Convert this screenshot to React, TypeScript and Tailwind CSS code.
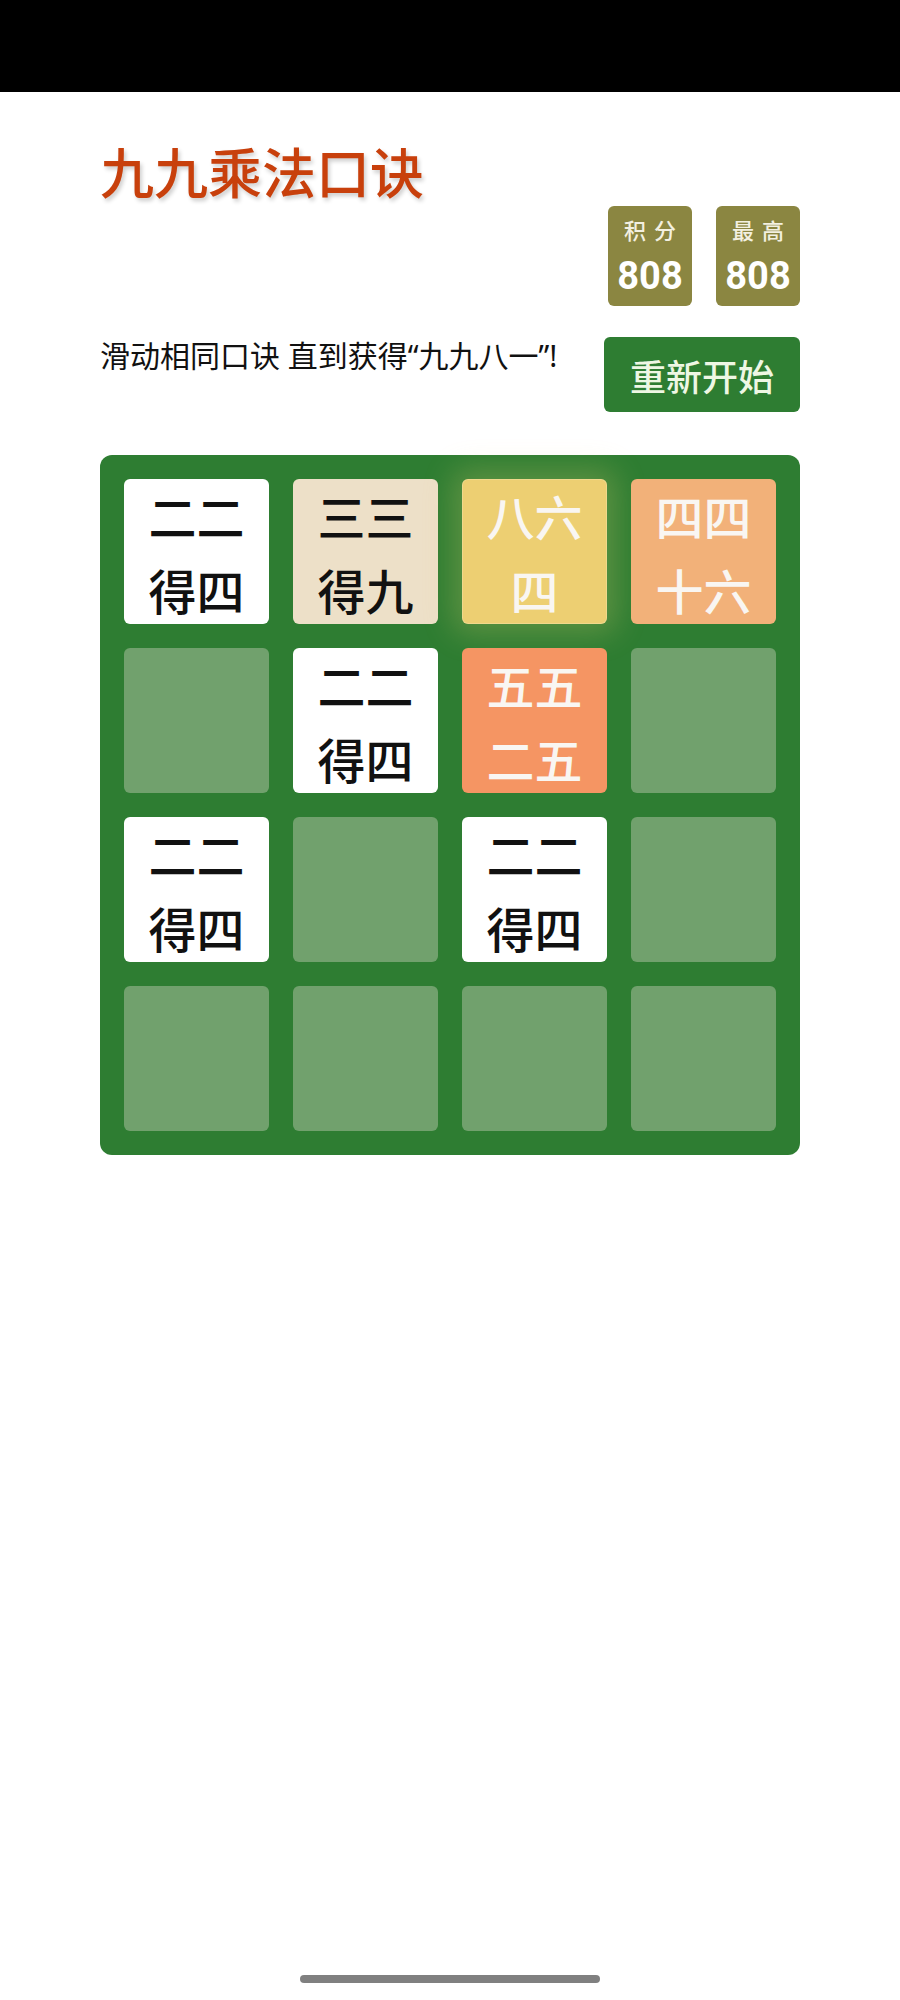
const CJK = { fontFamily: '"Noto Sans", "Noto Sans CJK SC", sans-serif' };

type Cell = {
	lines: [string, string];
	bg: string;
	glow?: boolean;
} | null;

const WHITE_TILE = "bg-white text-[#111]";

const BOARD: Cell[] = [
	{ lines: ["二二", "得四"], bg: WHITE_TILE },
	{ lines: ["三三", "得九"], bg: "bg-[#ede0c8] text-[#111]" },
	{ lines: ["八六", "四"], bg: "bg-[#edcf72] text-[#f9f6f2]", glow: true },
	{ lines: ["四四", "十六"], bg: "bg-[#f2b179] text-[#f9f6f2]" },
	null,
	{ lines: ["二二", "得四"], bg: WHITE_TILE },
	{ lines: ["五五", "二五"], bg: "bg-[#f59563] text-[#f9f6f2]" },
	null,
	{ lines: ["二二", "得四"], bg: WHITE_TILE },
	null,
	{ lines: ["二二", "得四"], bg: WHITE_TILE },
	null,
	null,
	null,
	null,
	null,
];

function ScoreBox({ label, value }: { label: string; value: number }) {
	return (
		<div className="flex h-[100px] w-[84px] flex-col items-center rounded-[6px] bg-[#8b8641] text-white">
			<span
				className="mt-[13px] pl-[8px] text-[22px] font-medium leading-none tracking-[8px] text-[#f3f0e0]"
				style={CJK}
			>
				{label}
			</span>
			<span
				className="mt-[16px] text-[38px] font-bold leading-none"
				style={{ fontFamily: 'Roboto, "Noto Sans", sans-serif' }}
			>
				{value}
			</span>
		</div>
	);
}

function Tile({ cell }: { cell: Cell }) {
	if (!cell) {
		return <div className="h-[145px] rounded-[6px] bg-[#71a16d]" />;
	}
	return (
		<div
			className={`flex h-[145px] flex-col items-center justify-center rounded-[6px] text-[48px] font-medium leading-[74px] ${cell.bg} ${
				cell.glow
					? "shadow-[0_0_30px_10px_rgba(243,215,116,0.24),inset_0_0_0_1px_rgba(255,255,255,0.19)]"
					: ""
			}`}
			style={{ fontFamily: '"Noto Sans CJK SC", sans-serif' }}
		>
			<span>{cell.lines[0]}</span>
			<span>{cell.lines[1]}</span>
		</div>
	);
}

export default function App() {
	return (
		<div className="flex min-h-[2000px] w-full flex-col bg-white">
			{/* status bar */}
			<div className="h-[92px] w-full shrink-0 bg-black" />

			<div className="mx-auto w-[700px]">
				<h1
					className="mt-[52px] text-[54px] font-medium leading-[54px] text-[#c8400c] [text-shadow:2px_3px_4px_rgba(0,0,0,0.2)]"
					style={{ fontFamily: '"Noto Sans CJK SC", sans-serif' }}
				>
					九九乘法口诀
				</h1>

				<div className="mt-[8px] flex justify-end gap-[24px]">
					<ScoreBox label="积分" value={808} />
					<ScoreBox label="最高" value={808} />
				</div>

				<div className="mt-[31px] flex items-start justify-between">
					<p className="pt-[4px] text-[30px] leading-none text-[#111]" style={CJK}>
						滑动相同口诀 直到获得“九九八一”!
					</p>
					<button
						className="h-[75px] w-[196px] rounded-[6px] bg-[#2e7d32] text-[36px] font-medium leading-none text-[#eef7e4]"
						style={{ fontFamily: '"Noto Sans CJK SC", sans-serif' }}
					>
						重新开始
					</button>
				</div>

				<div className="mt-[43px] grid h-[700px] grid-cols-4 content-between gap-[24px] rounded-[12px] bg-[#2e7d32] p-[24px]">
					{BOARD.map((cell, i) => (
						<Tile key={i} cell={cell} />
					))}
				</div>
			</div>

			<div className="flex-1" />
			{/* home indicator */}
			<div className="mx-auto mb-[17px] h-[8px] w-[300px] rounded-full bg-[#808080]" />
		</div>
	);
}
